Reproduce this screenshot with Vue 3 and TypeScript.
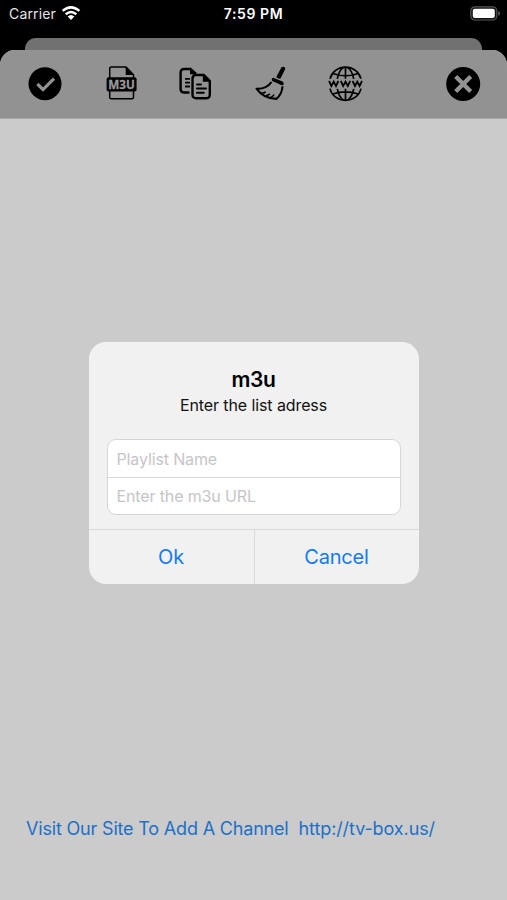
<script setup lang="ts">
import { ref } from 'vue'

const playlistName = ref('')
const playlistUrl = ref('')
const actions: string[] = ['Ok', 'Cancel']
</script>

<template>
  <div class="screen">
    <header class="status">
      <div class="network">
        <span class="carrier">Carrier</span>
        <svg class="wifi" width="20" height="15" viewBox="0 0 20 15" aria-hidden="true">
          <path d="M1.6 4.9Q10 -2.2 18.4 4.9M4.7 8.3Q10 3.7 15.3 8.3" fill="none" stroke="#fff" stroke-width="2.5" />
          <path d="M6.7 10.6Q10 7.6 13.3 10.6L10 14Z" fill="#fff" />
        </svg>
      </div>
      <span class="time">7:59 PM</span>
      <svg class="battery" width="31" height="15" viewBox="0 0 31 15" aria-hidden="true">
        <rect x=".8" y=".8" width="26" height="13.2" rx="4" fill="#111" stroke="#555" stroke-width="1.2" />
        <rect x="2.8" y="2.8" width="22" height="9.3" rx="2" fill="#fff" />
        <path d="M28.4 5Q30 5.4 30 7.4T28.4 9.8Z" fill="#666" />
      </svg>
    </header>

    <div class="back-sheet"></div>
    <main class="sheet">
      <nav class="toolbar">
        <button class="tool" aria-label="Confirm">
          <svg width="36" height="36" viewBox="0 0 36 36">
            <circle cx="18" cy="17.7" r="16.5" />
            <path d="M10.4 18L16 23.6L27 12.7" fill="none" stroke="#929292" stroke-width="3.2" />
          </svg>
        </button>
        <button class="tool" aria-label="M3U">
          <svg width="36" height="36" viewBox="0 0 36 36">
            <path d="M7.7 12V2.5Q7.7 1.1 9.1 1.1H24L31.5 8.7V12M7.7 25V31.2Q7.7 32.8 9.2 32.8H30Q31.5 32.8 31.5 31.2V25" fill="none" stroke="#000" stroke-width="1.5" />
            <path d="M23.7 .5V9H32.2Z" />
            <rect x="4.6" y="11.2" width="30" height="14.4" rx="2" />
            <text x="19.6" y="22.8" text-anchor="middle" textLength="26.5" lengthAdjust="spacingAndGlyphs" class="m3u-mark">M3U</text>
          </svg>
        </button>
        <button class="tool" aria-label="Copy">
          <svg width="36" height="36" viewBox="0 0 36 36" fill="none" stroke="#000" stroke-width="2.4">
            <path d="M12.5 26.5H7.2Q3.6 26.5 3.6 22.9V6.6Q3.6 3 7.2 3H13.5L19 8" />
            <path d="M13 3V8.2H18.7Z" fill="#000" stroke="none" />
            <path d="M8 12.8H13M8 16.7H13M8 20.5H13" stroke-width="1.8" />
            <path d="M19 9H26.8L32.8 15V28.4Q32.8 32.2 29 32.2H19.3Q15.5 32.2 15.5 28.4V12.6Q15.5 9 19 9Z" />
            <path d="M25.8 8.5V15.8H33Z" fill="#000" stroke="none" />
            <path d="M20 18.4H24M20 22.4H29M20 26.8H26.8" stroke-width="2" stroke-linecap="round" />
          </svg>
        </button>
        <button class="tool" aria-label="Clear">
          <svg width="36" height="36" viewBox="0 0 36 36">
            <g transform="translate(1.5 -.4)">
              <path d="M28 1.6Q30.3 .6 31.6 2.2Q32 3 31.3 4.2L27.2 12.6Q25 14 22.8 11.4Z" />
              <path d="M18.4 13.2Q18.7 12 20.4 12.3L29 15.9Q31 17.2 30.1 18.9Q29.4 20 27.6 19.4L18.8 15.3Q17.8 14.4 18.4 13.2Z" />
              <path d="M18 16.4C14.8 21 9.5 23.4 3 23.1C7.5 29.5 14.3 33.2 22.8 33.3C27 29.8 28.7 25.3 29 20.6" fill="none" stroke="#000" stroke-width="2.1" stroke-linejoin="round" />
              <path d="M7.5 27.7Q10.5 27.5 12.2 26.4M12 30.4Q15 29.7 16.4 28.3M16.8 32.1Q19.5 30.6 20.6 29" fill="none" stroke="#000" stroke-width="1.6" />
            </g>
          </svg>
        </button>
        <button class="tool" aria-label="Browse">
          <svg width="36" height="36" viewBox="0 0 36 36" fill="none" stroke="#000" stroke-width="1.7">
            <path d="M3 12.8C4.8 5.8 11 1.2 18.5 1.2S32.2 5.8 34 12.8M3 22.6C4.8 29.8 11 34.3 18.5 34.3S32.2 29.8 34 22.6" />
            <path d="M18.5 1.2V12.8M18.5 22.8V34.3M10.3 12.8Q11.8 4.6 16.5 1.4M26.7 12.8Q25.2 4.6 20.5 1.4M10.3 22.8Q11.8 31 16.5 34.1M26.7 22.8Q25.2 31 20.5 34.1M5.8 7.5Q18.5 12 31.2 7.5M5.8 28Q18.5 23.8 31.2 28" />
            <path d="M2 15L4.4 20L6.7 15.7L9 20L11.4 15M13.8 15L16.2 20L18.5 15.7L20.8 20L23.2 15M25.6 15L28 20L30.3 15.7L32.6 20L35 15" stroke-width="1.8" />
          </svg>
        </button>
        <button class="tool close" aria-label="Close">
          <svg width="36" height="36" viewBox="0 0 36 36">
            <circle cx="18.2" cy="18" r="17" />
            <path d="M10.7 10.5L25.7 25.5M25.7 10.5L10.7 25.5" stroke="#929292" stroke-width="4.4" />
          </svg>
        </button>
      </nav>
      <footer class="site-link">
        <span class="visit">Visit Our Site To Add A Channel</span>
        <span class="url">http://tv-box.us/</span>
      </footer>
    </main>

    <div class="overlay">
      <section class="alert" role="dialog" aria-labelledby="alert-title">
        <div class="alert-content">
          <h1 id="alert-title">m3u</h1>
          <p>Enter the list adress</p>
          <div class="fields">
            <input v-model="playlistName" class="field" placeholder="Playlist Name" />
            <input v-model="playlistUrl" class="field" placeholder="Enter the m3u URL" />
          </div>
        </div>
        <div class="actions">
          <button v-for="action in actions" :key="action">{{ action }}</button>
        </div>
      </section>
    </div>
  </div>
</template>

<style>
body { background: #000; }
</style>

<style scoped>
* { box-sizing: border-box; }
.screen {
  position: relative;
  display: flex;
  flex-direction: column;
  width: 507px;
  height: 900px;
  overflow: hidden;
  background: #000;
  font-family: Inter, "Liberation Sans", sans-serif;
}
.status {
  display: grid;
  grid-template-columns: 1fr auto 1fr;
  height: 38px;
  padding: 6px 6px 0 9px;
  color: #fff;
  line-height: 16px;
}
.network { display: flex; gap: 5px; }
.carrier { font-size: 14px; letter-spacing: .15px; color: #e5e5e5; }
.wifi { display: block; }
.time { margin-right: 3px; font-size: 14px; font-weight: 600; letter-spacing: .6px; }
.battery { justify-self: end; }
.back-sheet {
  flex: none;
  height: 12px;
  margin: 0 25px;
  border-radius: 11px 11px 0 0;
  background: #717171;
}
.sheet {
  flex: 1;
  display: flex;
  flex-direction: column;
  overflow: hidden;
  border-radius: 15px 15px 0 0;
  background: #cbcbcb;
}
.toolbar {
  display: flex;
  align-items: center;
  gap: 39px;
  height: 69px;
  padding: 0 26px 1px 27px;
  border-bottom: 1px solid #a9a9a9;
  background: #929292;
}
button { padding: 0; border: 0; background: none; font: inherit; }
.tool { width: 36px; height: 36px; }
.tool svg { display: block; }
.close { margin-left: auto; }
.m3u-mark { fill: #999; stroke: #999; stroke-width: .3px; font: 700 12.5px "Open Sans", sans-serif; }
.site-link {
  display: flex;
  gap: 10px;
  margin: auto 0 59px 26px;
  color: #1c70c8;
  font-size: 18px;
  line-height: 24px;
  letter-spacing: -.18px;
  white-space: nowrap;
}
.url { letter-spacing: -.1px; }
.overlay {
  position: absolute;
  inset: 26px 0 0;
  display: flex;
  align-items: center;
  justify-content: center;
}
.alert {
  width: 330px;
  height: 242px;
  display: flex;
  flex-direction: column;
  overflow: hidden;
  border-radius: 17px;
  background: #f0f1f0;
}
.alert-content { height: 187px; padding: 25px 18px 0; text-align: center; }
h1 { margin: 0; font-size: 21px; font-weight: 600; line-height: 26px; letter-spacing: -.4px; }
p { margin: 2px 0 0; font-size: 16px; line-height: 20px; letter-spacing: -.1px; color: #111; }
.fields {
  display: grid;
  grid-template-rows: 37px 37px;
  height: 76px;
  margin-top: 24px;
  overflow: hidden;
  border: 1px solid #d5d5d5;
  border-radius: 9px;
  background: #fff;
}
.field {
  width: 100%;
  min-height: 0;
  padding: 1px 9px 0;
  border: 0;
  background: none;
  font: 16px Inter, sans-serif;
  letter-spacing: -.13px;
  outline: none;
}
.field + .field { padding-top: 0; border-top: 1px solid #d9d9d9; }
.field::placeholder { color: #c5c5c7; opacity: 1; }
.actions {
  flex: 1;
  display: grid;
  grid-template-columns: 165px 165px;
  border-top: 1px solid #d8d9d8;
}
.actions button { color: #127bf2; font-size: 20px; letter-spacing: -.2px; }
.actions button + button { border-left: 1px solid #d8d9d8; }
</style>
